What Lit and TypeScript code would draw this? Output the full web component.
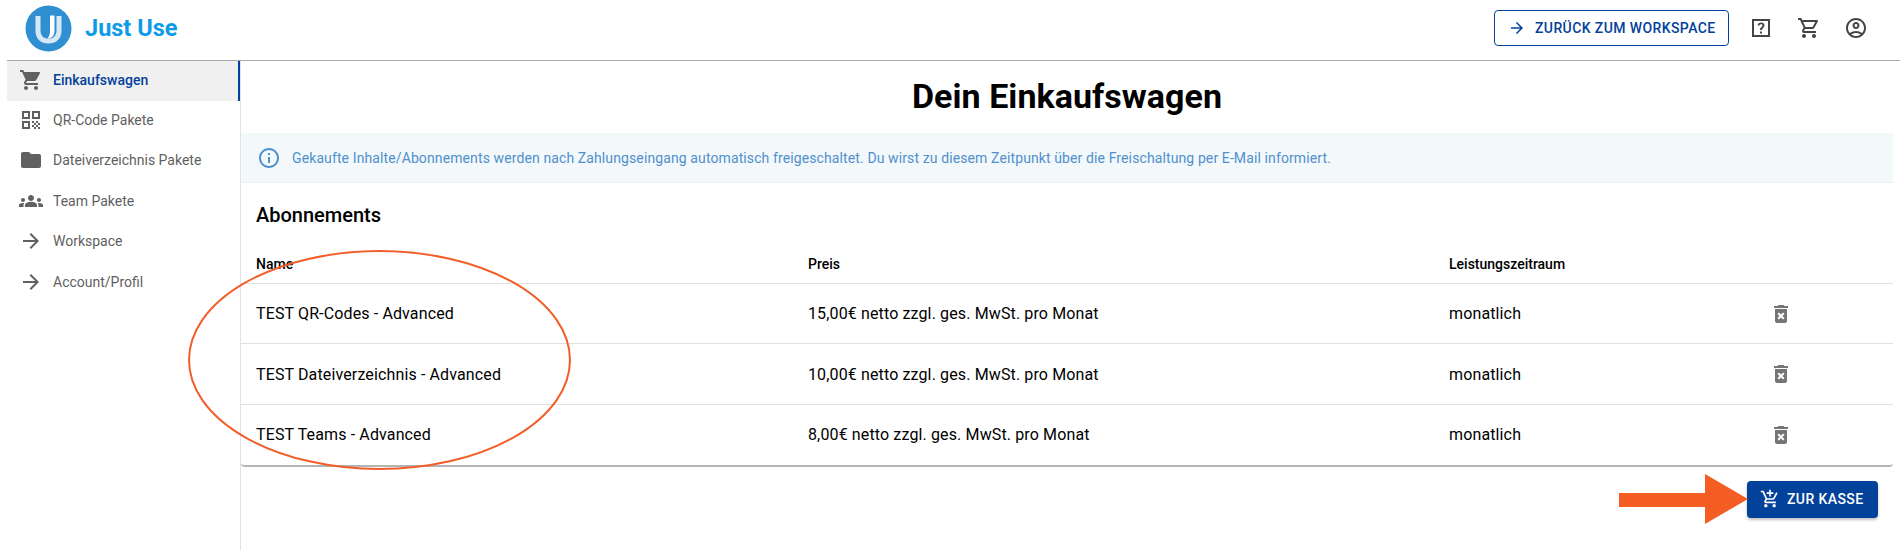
import { LitElement, html, css, svg } from "lit";
import { customElement } from "lit/decorators.js";

const I = {
  cart: "M7 18c-1.1 0-1.99.9-1.99 2S5.9 22 7 22s2-.9 2-2-.9-2-2-2zM1 2v2h2l3.6 7.59-1.35 2.45c-.16.28-.25.61-.25.96 0 1.1.9 2 2 2h12v-2H7.42c-.14 0-.25-.11-.25-.25l.03-.12.9-1.63h7.45c.75 0 1.41-.41 1.75-1.03l3.58-6.49c.08-.14.12-.31.12-.48 0-.55-.45-1-1-1H5.21l-.94-2H1zm16 16c-1.1 0-1.99.9-1.99 2s.89 2 1.99 2 2-.9 2-2-.9-2-2-2z",
  cartO: "M15.55 13c.75 0 1.41-.41 1.75-1.03l3.58-6.49c.37-.66-.11-1.48-.87-1.48H5.21l-.94-2H1v2h2l3.6 7.59-1.35 2.44C4.52 15.37 5.48 17 7 17h12v-2H7l1.1-2h7.45zM6.16 6h12.15l-2.76 5H8.53L6.16 6zM7 18c-1.1 0-1.99.9-1.99 2S5.9 22 7 22s2-.9 2-2-.9-2-2-2zm10 0c-1.1 0-1.99.9-1.99 2s.89 2 1.99 2 2-.9 2-2-.9-2-2-2z",
  cartAdd: "M11 9h2V6h3V4h-3V1h-2v3H8v2h3v3zm-4 9c-1.1 0-1.99.9-1.99 2S5.9 22 7 22s2-.9 2-2-.9-2-2-2zm10 0c-1.1 0-1.99.9-1.99 2s.89 2 1.99 2 2-.9 2-2-.9-2-2-2zm-9.83-3.25l.03-.12.9-1.63h7.45c.75 0 1.41-.41 1.75-1.03l3.86-7.01L19.42 4h-.01l-1.1 2-2.76 5H8.53l-.13-.27L6.16 6l-.95-2-.94-2H1v2h2l3.6 7.59-1.35 2.45c-.16.28-.25.61-.25.96 0 1.1.9 2 2 2h12v-2H7.42c-.13 0-.25-.11-.25-.25z",
  qr: "M3 11h8V3H3v8zm2-6h4v4H5V5zM3 21h8v-8H3v8zm2-6h4v4H5v-4zM13 3v8h8V3h-8zm6 6h-4V5h4v4zM19 19h2v2h-2zM13 13h2v2h-2zM15 15h2v2h-2zM13 17h2v2h-2zM15 19h2v2h-2zM17 17h2v2h-2zM17 13h2v2h-2zM19 15h2v2h-2z",
  folder: "M10 4H4c-1.1 0-1.99.9-1.99 2L2 18c0 1.1.9 2 2 2h16c1.1 0 2-.9 2-2V8c0-1.1-.9-2-2-2h-8l-2-2z",
  groups: "M12 12.75c1.63 0 3.07.39 4.24.9 1.08.48 1.76 1.56 1.76 2.73V18H6v-1.61c0-1.18.68-2.26 1.76-2.73 1.17-.52 2.61-.91 4.24-.91zM4 13c1.1 0 2-.9 2-2s-.9-2-2-2-2 .9-2 2 .9 2 2 2zm1.13 1.1c-.37-.06-.74-.1-1.13-.1-.99 0-1.93.21-2.78.58C.48 14.9 0 15.62 0 16.43V18h4.5v-1.61c0-.83.23-1.61.63-2.29zM20 13c1.1 0 2-.9 2-2s-.9-2-2-2-2 .9-2 2 .9 2 2 2zm4 3.43c0-.81-.48-1.53-1.22-1.85-.85-.37-1.79-.58-2.78-.58-.39 0-.76.04-1.13.1.4.68.63 1.46.63 2.29V18H24v-1.57zM12 6c1.66 0 3 1.34 3 3s-1.34 3-3 3-3-1.34-3-3 1.34-3 3-3z",
  arrow: "M12 4l-1.41 1.41L16.17 11H4v2h12.17l-5.58 5.59L12 20l8-8z",
  trash: "M6 19c0 1.1.9 2 2 2h8c1.1 0 2-.9 2-2V7H6v12zm2.46-7.12l1.41-1.41L12 12.59l2.12-2.12 1.41 1.41L13.41 14l2.12 2.12-1.41 1.41L12 15.41l-2.12 2.12-1.41-1.41L10.59 14l-2.13-2.12zM15.5 4l-1-1h-5l-1 1H5v2h14V4h-3.5z",
  info: "M11 7h2v2h-2zm0 4h2v6h-2zm1-9C6.48 2 2 6.48 2 12s4.48 10 10 10 10-4.48 10-10S17.52 2 12 2zm0 18c-4.41 0-8-3.59-8-8s3.59-8 8-8 8 3.59 8 8-3.59 8-8 8z",
  help: "M3 3v18h18V3H3zm16 16H5V5h14v14zM11 15.5h2v2h-2zM12 6.5c-1.9 0-3.2 1.2-3.4 3h1.9c.1-.8.7-1.3 1.5-1.3s1.5.5 1.5 1.3c0 1.4-2.5 1.6-2.5 4.5h2c0-2.1 2.5-2.4 2.5-4.6 0-1.8-1.5-2.9-3.5-2.9z",
  account: "M12 2C6.48 2 2 6.48 2 12s4.48 10 10 10 10-4.48 10-10S17.52 2 12 2zM7.35 18.5C8.66 17.56 10.26 17 12 17s3.34.56 4.65 1.5c-1.31.94-2.91 1.5-4.65 1.5s-3.34-.56-4.65-1.5zm10.79-1.38C16.45 15.8 14.32 15 12 15s-4.45.8-6.14 2.12C4.7 15.73 4 13.95 4 12c0-4.42 3.58-8 8-8s8 3.58 8 8c0 1.95-.7 3.73-1.86 5.12zM12 6c-1.93 0-3.5 1.57-3.5 3.5S10.07 13 12 13s3.5-1.57 3.5-3.5S13.93 6 12 6zm0 5c-.83 0-1.5-.67-1.5-1.5S11.17 8 12 8s1.5.67 1.5 1.5S12.83 11 12 11z",
};

const icon = (d: string, size = 24) => html`<svg class="ic" width=${size} height=${size} viewBox="0 0 24 24" fill="currentColor"><path d=${d}></path></svg>`;

const NAV = [
  ["Einkaufswagen", I.cart],
  ["QR-Code Pakete", I.qr],
  ["Dateiverzeichnis Pakete", I.folder],
  ["Team Pakete", I.groups],
  ["Workspace", I.arrow],
  ["Account/Profil", I.arrow],
];
const ROWS = [
  ["TEST QR-Codes - Advanced", "15,00€ netto zzgl. ges. MwSt. pro Monat"],
  ["TEST Dateiverzeichnis - Advanced", "10,00€ netto zzgl. ges. MwSt. pro Monat"],
  ["TEST Teams - Advanced", "8,00€ netto zzgl. ges. MwSt. pro Monat"],
];

@customElement("app-root")
export class AppRoot extends LitElement {
  static styles = css`
    :host { display: block; width: 1900px; height: 550px; position: relative; overflow: hidden; background: #fff;
      font-family: Roboto, "Liberation Sans", sans-serif; color: #000; }
    .ic { display: block; flex: none; }
    header { height: 60px; display: flex; align-items: center; padding: 0 32px 4px 25px; box-sizing: border-box; }
    .logo { display: block; flex: none; margin-right: 13px; }
    .brand { font-size: 23.5px; font-weight: 700; color: #0d9be8; flex: 1; }
    .back { height: 36px; box-sizing: border-box; width: 235px; border: 1px solid #03429a; border-radius: 4px; color: #03429a;
      display: flex; align-items: center; gap: 9px; padding-left: 13px; font-size: 14px; font-weight: 500; letter-spacing: .4px; white-space: nowrap; }
    .tools { display: flex; align-items: center; gap: 23.5px; margin-left: 20px; color: #444; }
    .body { display: flex; margin-left: 7px; border-top: 1px solid #aaa; height: 489px; }
    nav { width: 233px; flex: none; border-right: 1px solid #e2e2e2; }
    .item { height: 40.4px; display: flex; align-items: center; padding: 0 0 3px 12px; color: #5f5f5f; font-size: 14px; font-weight: 400; box-sizing: border-box; }
    .item .ic { margin-right: 10px; color: #616161; }
    .item.on { background: #f0f0f0; color: #03429a; font-weight: 500; border-right: 2px solid #03429a; }
    main { flex: 1; padding-right: 7px; min-width: 0; }
    h1 { margin: 0; height: 72px; font-size: 34px; font-weight: 700; line-height: 70px; text-align: center; letter-spacing: .05px; }
    .alert { height: 50px; background: #f3f8fb; display: flex; align-items: center; padding-left: 16px; color: #5090cc; font-size: 14px; gap: 11px; border-bottom: 1px solid #eef1f4; box-sizing: border-box; letter-spacing: .11px; }
    .card { border-radius: 0 0 4px 4px; border-bottom: 2px solid #b4b4b4; }
    h2 { margin: 0; padding: 20px 15px 0; height: 60px; box-sizing: border-box; font-size: 20px; font-weight: 500; line-height: 24px; }
    .row { display: grid; grid-template-columns: 552px 641px 1fr; padding-left: 15px; align-items: center; border-bottom: 1px solid #e0e0e0; font-size: 16px; letter-spacing: .13px; }
    .row.head { height: 38px; padding-top: 2px; font-size: 14px; font-weight: 500; letter-spacing: 0; }
    .row.data { height: 59.4px; }
    .row.data:last-child { border-bottom: 0; height: 60.2px; }
    .cell-last { display: grid; grid-template-columns: 320px 1fr; align-items: center; }
    .trash { color: #757575; }
    .foot { display: flex; justify-content: flex-end; padding: 14px 15px 0 0; }
    .buy { width: 131px; height: 37px; background: #03429a; color: #fff; border-radius: 4px; display: flex; align-items: center; padding-left: 13px; box-sizing: border-box; gap: 7px;
      font-size: 14px; font-weight: 500; letter-spacing: .4px; box-shadow: 0 2px 3px rgba(0,0,0,.25); }
    .annot { position: absolute; left: 0; top: 0; pointer-events: none; }
  `;

  render() {
    return html`
      <header>
        <svg class="logo" width="47" height="47" viewBox="0 0 47 47">
          <circle cx="23.5" cy="23.5" r="23" fill="#2f8fd0"></circle>
          <path d="M10.500 11h5v14c0 6 3 8.500 8 8.500s8-2.500 8-8.500V11h5v15c0 8-5.500 12.500-13 12.500s-13-4.500-13-12.500z" fill="#d6e8f5"></path>
          <path d="M25 10.500h4.500v15c0 5-2 7.500-7 8 1.500-2 2.500-3.500 2.500-8z" fill="#fff"></path>
        </svg>
        <span class="brand">Just Use</span>
        <div class="back">${icon(I.arrow, 18)}ZURÜCK ZUM WORKSPACE</div>
        <div class="tools">
          ${icon(I.help, 24)}
          ${icon(I.cartO, 24)}
          ${icon(I.account, 24)}
        </div>
      </header>
      <div class="body">
        <nav>
          ${NAV.map(([t, d], i) => html`<div class="item ${i === 0 ? "on" : ""}">${icon(d, 24)}<span>${t}</span></div>`)}
        </nav>
        <main>
          <h1>Dein Einkaufswagen</h1>
          <div class="alert">${icon(I.info, 24)}<span>Gekaufte Inhalte/Abonnements werden nach Zahlungseingang automatisch freigeschaltet. Du wirst zu diesem Zeitpunkt über die Freischaltung per E-Mail informiert.</span></div>
          <div class="card">
            <h2>Abonnements</h2>
            <div class="row head"><span>Name</span><span>Preis</span><span>Leistungszeitraum</span></div>
            ${ROWS.map(([n, p]) => html`<div class="row data"><span>${n}</span><span>${p}</span>
              <div class="cell-last"><span>monatlich</span><span class="trash">${icon(I.trash, 24)}</span></div></div>`)}
          </div>
          <div class="foot"><div class="buy">${icon(I.cartAdd, 20)}ZUR KASSE</div></div>
        </main>
      </div>
      <svg class="annot" width="1900" height="550" viewBox="0 0 1900 550">
        ${svg`<ellipse cx="379.5" cy="360" rx="190.5" ry="109" fill="none" stroke="#f15e2a" stroke-width="2"></ellipse>
        <path d="M1619 493h86V474l43 25-43 25V507h-86z" fill="#f45d24"></path>`}
      </svg>
    `;
  }
}
